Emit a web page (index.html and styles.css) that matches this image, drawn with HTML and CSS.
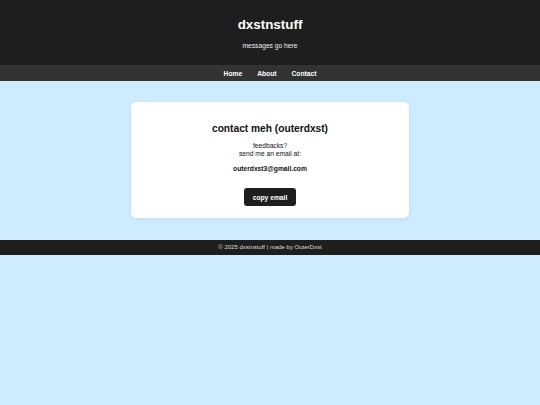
FILE: index.html
```html
<!DOCTYPE html>
<html>
<head>
<meta charset="utf-8">
<link rel="stylesheet" href="styles.css">
</head>
<body>
<header class="site-header">
  <h1 class="site-title">dxstnstuff</h1>
  <p class="site-message">messages go here</p>
</header>
<nav class="site-nav">
  <a href="#">Home</a>
  <a href="#">About</a>
  <a href="#">Contact</a>
</nav>
<main class="main">
  <section class="card">
    <h2 class="card-title">contact meh (outerdxst)</h2>
    <p class="card-text">feedbacks?<br>send me an email at:</p>
    <p class="card-email">outerdxst3@gmail.com</p>
    <button class="copy-btn">copy email</button>
  </section>
</main>
<footer class="site-footer">© 2025 dxstnstuff | made by OuterDxst</footer>
</body>
</html>
```
FILE: styles.css
```css
html, body {
  margin: 0;
  padding: 0;
}
body {
  background: #cdecff;
  font-family: "Liberation Sans", Arial, sans-serif;
  font-size: 6.7px;
  color: #111;
}
.site-header {
  background: #1e1e1e;
  color: #fff;
  text-align: center;
  padding: 17px 0 15px;
}
.site-title {
  margin: 0 0 10px;
  font-size: 13.4px;
  line-height: 15px;
  font-weight: bold;
}
.site-message {
  margin: 0;
  font-size: 6.7px;
  line-height: 8px;
  color: #eee;
}
.site-nav {
  background: #333;
  height: 16px;
  display: flex;
  justify-content: center;
  align-items: center;
  gap: 15px;
}
.site-nav a {
  color: #fff;
  text-decoration: none;
  font-weight: bold;
  font-size: 6.7px;
}
.main {
  padding: 21px 0 22px;
  display: flex;
  justify-content: center;
}
.card {
  width: 278px;
  box-sizing: border-box;
  background: #fff;
  border-radius: 5px;
  box-shadow: 0 1px 4px rgba(0, 0, 0, 0.08);
  text-align: center;
  padding: 21px 20px 12px;
}
.card-title {
  margin: 0 0 7px;
  font-size: 10.2px;
  line-height: 12px;
  font-weight: bold;
}
.card-text {
  margin: 0 0 7px;
  line-height: 8px;
}
.card-email {
  margin: 0 0 15px;
  line-height: 8px;
  font-weight: bold;
}
.copy-btn {
  background: #1e1e1e;
  color: #fff;
  border: none;
  border-radius: 3px;
  font-family: inherit;
  font-size: 6.7px;
  font-weight: bold;
  width: 52px;
  height: 18px;
  padding: 0;
}
.site-footer {
  background: #1e1e1e;
  color: #ddd;
  text-align: center;
  font-size: 6px;
  height: 15px;
  line-height: 15px;
}
```
